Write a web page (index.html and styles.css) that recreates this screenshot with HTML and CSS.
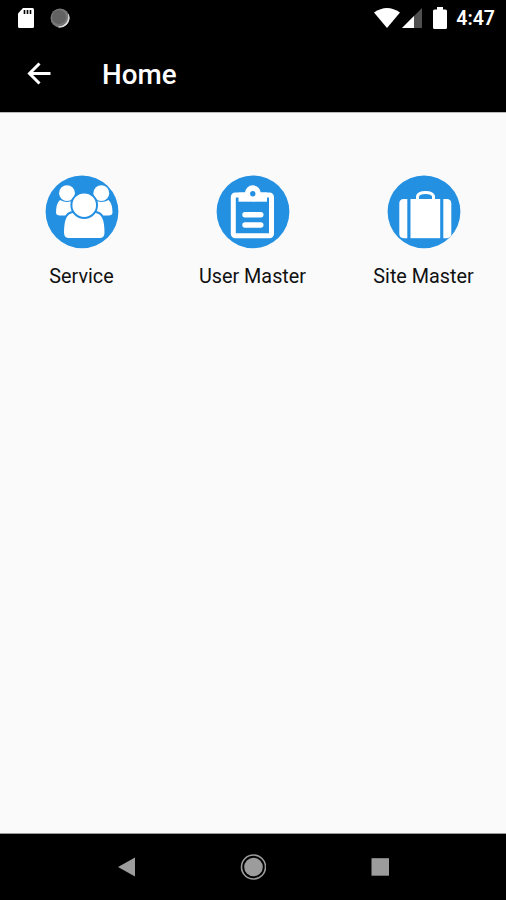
FILE: index.html
```html
<!DOCTYPE html>
<html lang="en">
<head>
  <meta charset="UTF-8">
  <meta name="viewport" content="width=device-width, initial-scale=1.0">
  <title>Home</title>
  <link rel="stylesheet" href="styles.css">
</head>
<body>
  <div class="screen">
    <div class="status-bar">
      <svg class="sd" width="18" height="22" viewBox="0 0 18 22">
        <path d="M6 1h9.500q1.500 0 1.500 1.500v17q0 1.500-1.500 1.500h-13q-1.500 0-1.500-1.500V6.500z" fill="#fff"/>
        <path d="M7.500 3v4M10.500 3v4M13.500 3v4" stroke="#000" stroke-width="1.600"/>
      </svg>
      <svg class="sync" width="20" height="20" viewBox="0 0 20 20">
        <circle cx="10" cy="10" r="9.500" fill="#777"/>
        <path d="M18.500 6.500A9.200 9.200 0 0 1 8.500 19A10.500 10.500 0 0 0 18.500 6.500z" fill="#fff" stroke="#ddd" stroke-width=".8"/>
        <circle cx="9" cy="9" r="7" fill="#626262"/>
      </svg>
      <div class="status-right">
        <svg width="26" height="20" viewBox="0 0 26 20">
          <path d="M0 4.600Q13-4.400 26 4.600L13 20z" fill="#fff"/>
        </svg>
        <svg class="signal" width="20" height="20" viewBox="0 0 20 20">
          <path d="M20 0v20H0z" fill="#505050"/>
          <path d="M12 8v12H0z" fill="#fff"/>
        </svg>
        <svg class="battery" width="14" height="22" viewBox="0 0 14 22">
          <path d="M4 0h6v2.500h2.500q1.500 0 1.500 1.500v16.500q0 1.500-1.500 1.500h-11q-1.500 0-1.500-1.500V4q0-1.500 1.500-1.500H4z" fill="#fff"/>
        </svg>
        <span class="time">4:47</span>
      </div>
    </div>

    <div class="header">
      <svg class="back" width="24" height="24" viewBox="0 0 24 24">
        <path d="M23.500 11.500H2.500M12.500 1.500L2.500 11.500l10 10" fill="none" stroke="#fff" stroke-width="3"/>
      </svg>
      <h1>Home</h1>
    </div>

    <div class="menu">
      <div class="item">
        <svg width="74" height="74" viewBox="9 8.500 74 74">
          <circle cx="46" cy="45.300" r="36.400" fill="#2490e2"/>
          <g fill="#fff">
            <circle cx="31" cy="26.700" r="7.900"/>
            <circle cx="65.300" cy="26.700" r="7.900"/>
            <path d="M24 33.500Q20 37 20 46q0 3 4 3h14V33.500q-7 4-14 0z"/>
            <path d="M72.500 33.500Q76.500 37 76.500 46q0 3-4 3h-14V33.500q7 4 14 0z"/>
          </g>
          <g fill="#fff" stroke="#2490e2" stroke-width="2">
            <path d="M37 45.500Q27 46 27 66q0 6.500 6 6.500h30.500q6 0 6-6.500Q69.500 46 59.500 45.500z"/>
            <circle cx="48.200" cy="38.700" r="12.800"/>
          </g>
        </svg>
        <span>Service</span>
      </div>
      <div class="item">
        <svg width="74" height="74" viewBox="9 8.500 74 74">
          <circle cx="46" cy="45.300" r="36.400" fill="#2490e2"/>
          <rect x="26.300" y="28.500" width="38.200" height="40.700" rx="2" fill="none" stroke="#fff" stroke-width="5"/>
          <rect x="31.500" y="26" width="28.500" height="9.200" fill="#fff"/>
          <circle cx="45.800" cy="26.800" r="8" fill="#fff"/>
          <circle cx="45.800" cy="27.200" r="2.700" fill="#2490e2"/>
          <path d="M38 48.200h15.800M38 58.500h15.800" stroke="#fff" stroke-width="5.400" stroke-linecap="round"/>
        </svg>
        <span>User Master</span>
      </div>
      <div class="item">
        <svg width="74" height="74" viewBox="9 8.500 74 74">
          <circle cx="46" cy="45.300" r="36.400" fill="#2490e2"/>
          <path d="M39.500 33v-3.300Q40.500 26 47.500 26t8 3.700V33" fill="none" stroke="#fff" stroke-width="3"/>
          <g fill="#fff">
            <path d="M29.300 32.500V71.700H25.500q-4.200-.5-4.200-4.500V37q0-4.500 4.500-4.500z"/>
            <rect x="32.500" y="32.500" width="29.700" height="39.200"/>
            <path d="M65.300 32.500V71.700h3.500q4.500-.5 4.500-4.500V37q0-4.500-4.500-4.500z"/>
          </g>
        </svg>
        <span>Site Master</span>
      </div>
    </div>

    <div class="nav-bar">
      <svg width="26" height="26" viewBox="0 0 26 26">
        <path d="M5 13L22 3.500v19z" fill="#9c9c9c"/>
      </svg>
      <svg width="26" height="26" viewBox="0 0 26 26">
        <circle cx="13.500" cy="13" r="12" fill="none" stroke="#9c9c9c" stroke-width="1.600"/>
        <circle cx="13.500" cy="13" r="9.300" fill="#9c9c9c"/>
      </svg>
      <svg width="26" height="26" viewBox="0 0 26 26">
        <rect x="4.500" y="4.200" width="17.500" height="17.500" fill="#9c9c9c"/>
      </svg>
    </div>
  </div>
</body>
</html>
```
FILE: styles.css
```css
body{
  margin: 0;
  font-family: Roboto, sans-serif;
  background: #fafafa;
}
svg{
  display: block;
  flex-shrink: 0;
}
.screen{
  width: 506px;
  height: 900px;
  display: flex;
  flex-direction: column;
}
.status-bar{
  height: 35px;
  background: #000;
  display: flex;
  align-items: center;
  padding: 0 11px 0 17px;
}
.sync{
  margin-left: 15px;
}
.status-right{
  margin-left: auto;
  display: flex;
  align-items: center;
  color: #fff;
}
.signal{
  margin-left: 2px;
}
.battery{
  margin-left: 11px;
}
.time{
  font-size: 19.5px;
  font-weight: 600;
  margin: 2px 0 0 9px;
}
.header{
  height: 77px;
  background: #000;
  border-bottom: 1px solid #bbb;
  display: flex;
  align-items: center;
  color: #fff;
}
.back{
  margin-left: 27px;
}
.header h1{
  margin: 2px 0 0 51px;
  font-size: 27.8px;
  font-weight: 500;
}
.menu{
  flex: 1;
  display: grid;
  grid-template-columns: repeat(3, 1fr);
  gap: 27px;
  padding: 62px 10px 0;
}
.item{
  display: flex;
  flex-direction: column;
  align-items: center;
  font-size: 19.8px;
  line-height: 24px;
  color: #111;
}
.item span{
  margin-top: 16px;
  margin-right: 1px;
  white-space: nowrap;
}
.nav-bar{
  height: 66px;
  background: #000;
  border-top: 1px solid #999;
  display: flex;
  justify-content: center;
  align-items: center;
  gap: 101px;
}
```
